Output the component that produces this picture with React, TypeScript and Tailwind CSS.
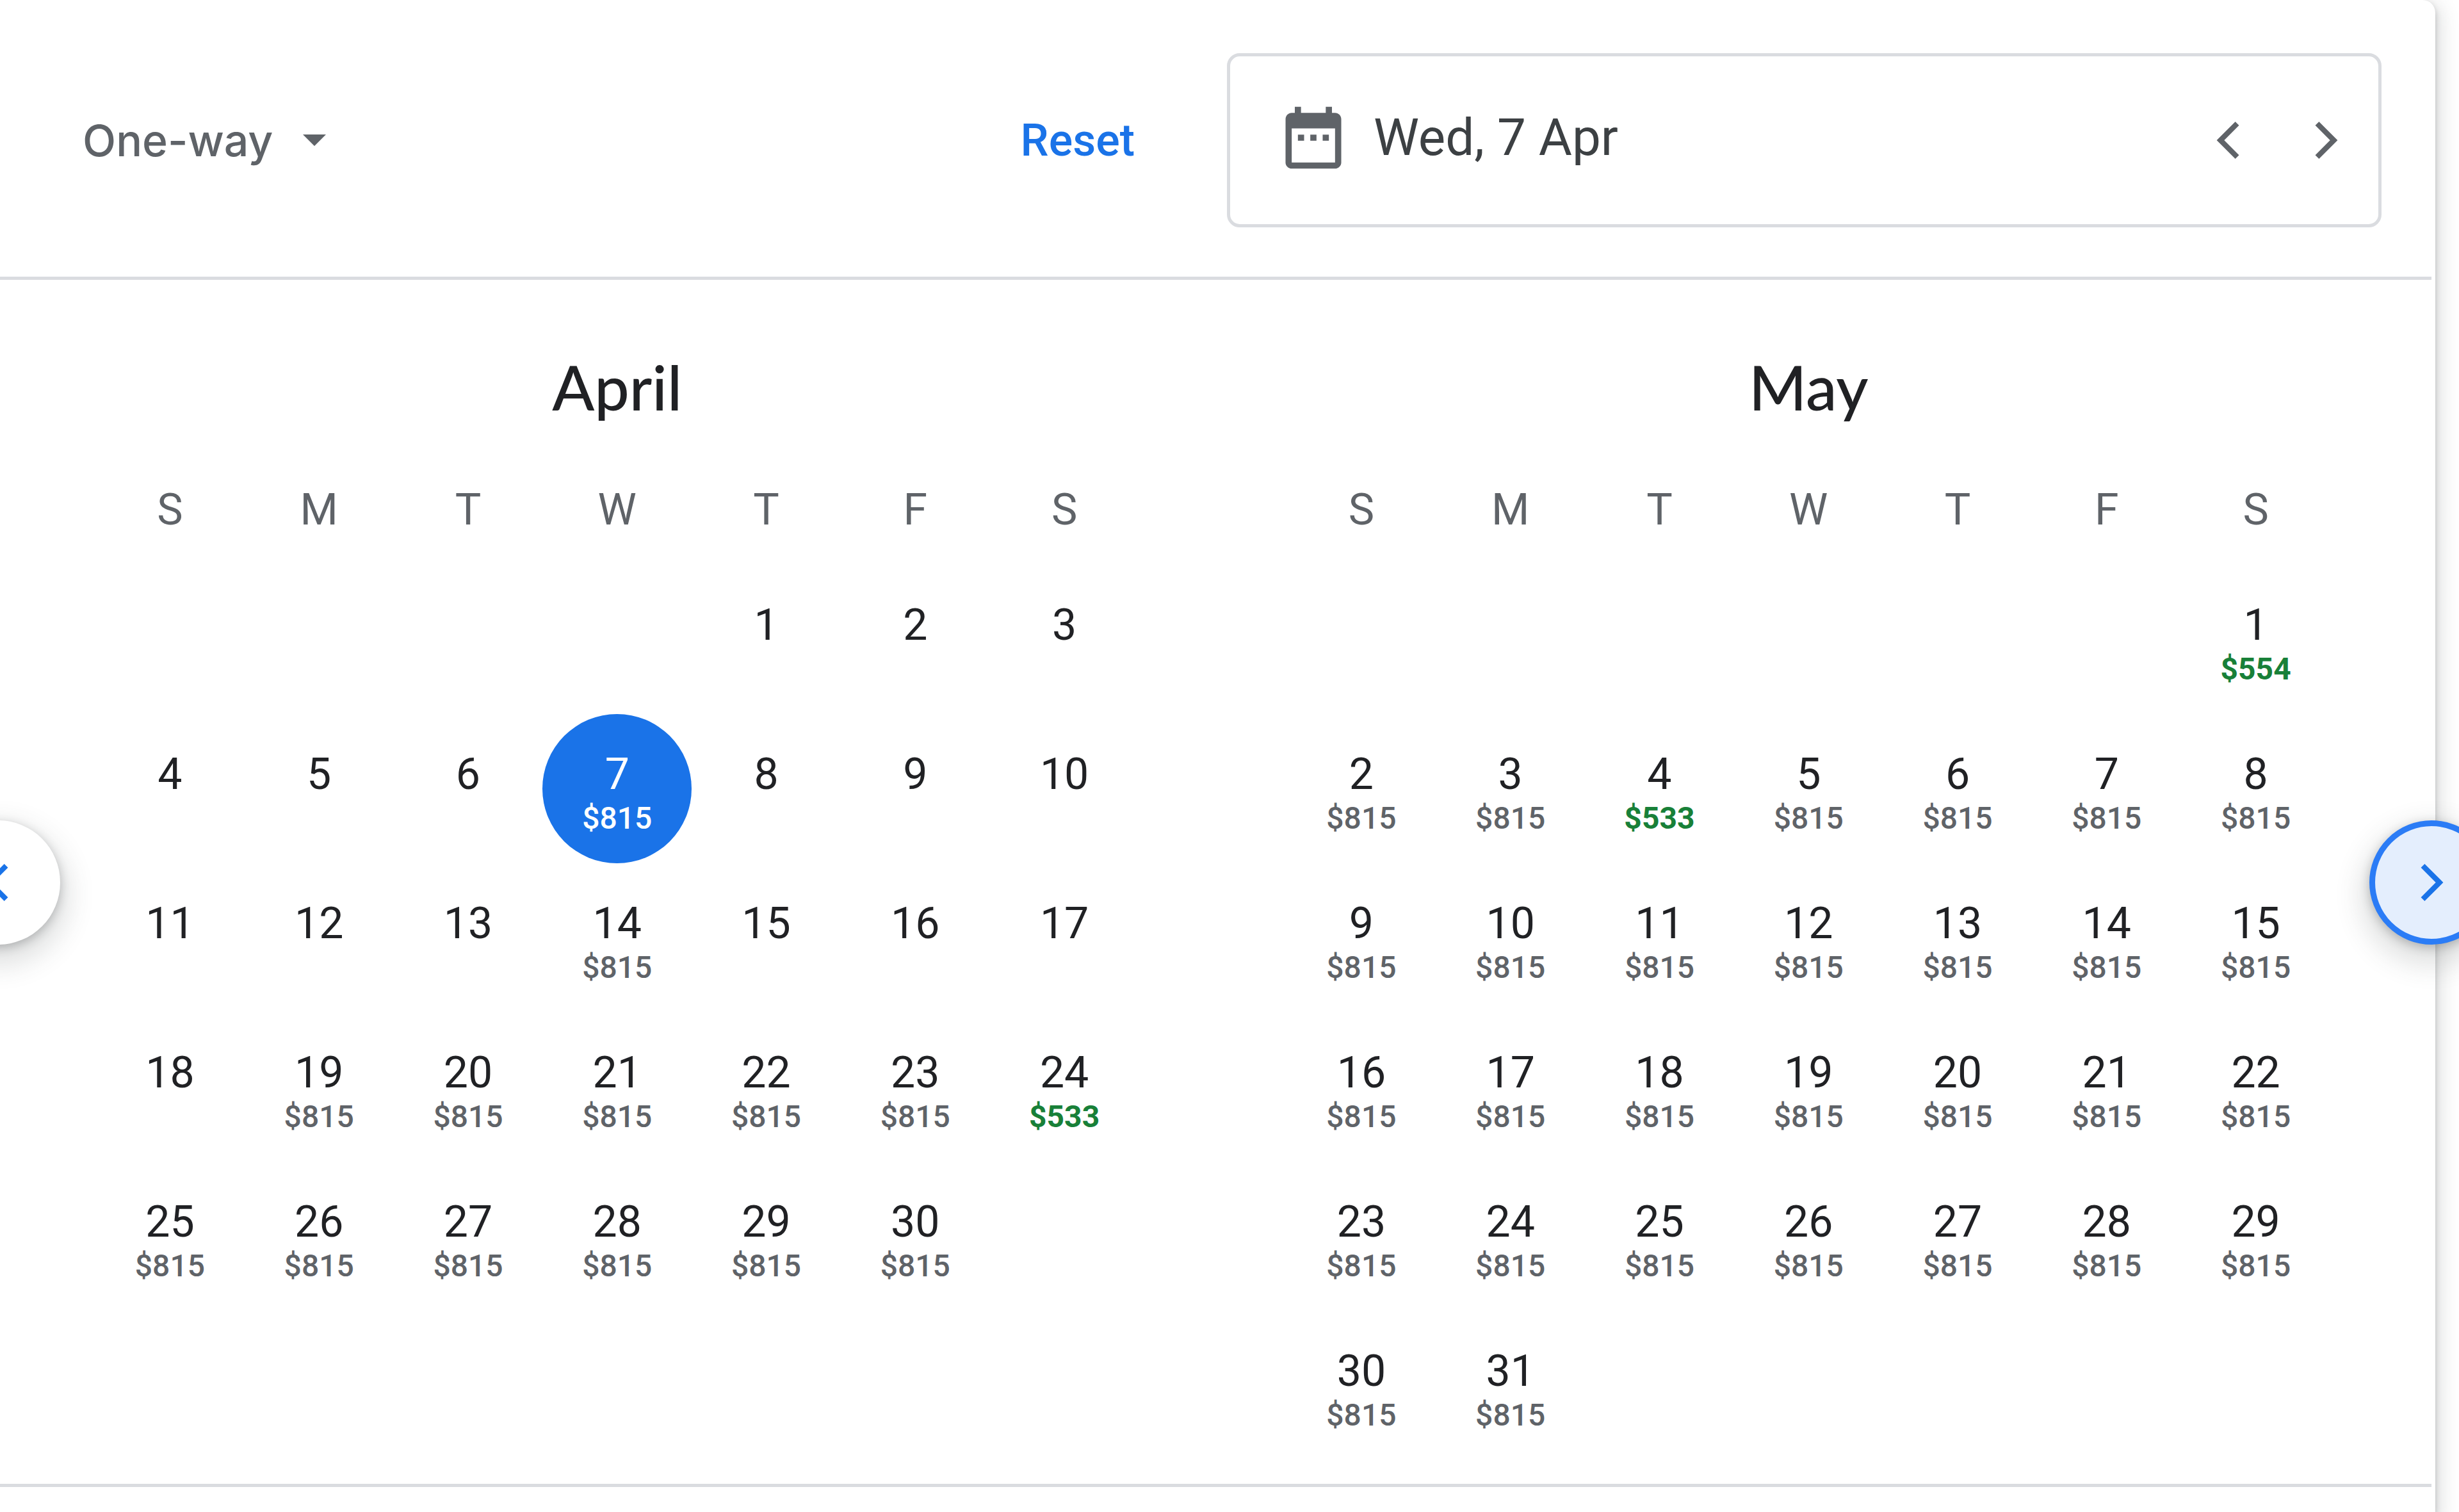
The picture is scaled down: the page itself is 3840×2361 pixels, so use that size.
import { useState } from 'react';

type Fares = Record<number, number>;

interface Month {
  name: string;
  offset: number; // weekday index of the 1st, Sunday = 0
  days: number;
  fares: Fares;
}

const WEEKDAYS = ['S', 'M', 'T', 'W', 'T', 'F', 'S'];
const CHEAP = 600;

// Same fare for a whole span of days
const span = (from: number, to: number, fare: number): Fares =>
  Object.fromEntries(Array.from({ length: to - from + 1 }, (_, i) => [from + i, fare]));

const MONTHS: Month[] = [
  {
    name: 'April',
    offset: 4,
    days: 30,
    fares: { 7: 815, 14: 815, ...span(19, 30, 815), 24: 533 },
  },
  {
    name: 'May',
    offset: 6,
    days: 31,
    fares: { ...span(2, 31, 815), 1: 554, 4: 533 },
  },
];

function toWeeks({ offset, days }: Month): (number | null)[][] {
  const rows = Math.ceil((offset + days) / 7);
  return Array.from({ length: rows }, (_, r) =>
    Array.from({ length: 7 }, (_, c) => {
      const day = r * 7 + c - offset + 1;
      return day >= 1 && day <= days ? day : null;
    }),
  );
}

function ChevronLeft() {
  return (
    <svg viewBox="0 0 24 24" className="size-[116px] shrink-0" fill="none" stroke="currentColor" strokeWidth="1.7" aria-hidden="true">
      <path d="M14.6 6.6L9.2 12l5.4 5.4" />
    </svg>
  );
}

function ChevronRight() {
  return (
    <svg viewBox="0 0 24 24" className="size-[116px] shrink-0" fill="none" stroke="currentColor" strokeWidth="1.7" aria-hidden="true">
      <path d="M9.2 6.6l5.4 5.4-5.4 5.4" />
    </svg>
  );
}

function CalendarIcon() {
  return (
    <svg viewBox="0 0 24 24" className="size-[116px] shrink-0 text-[#5f6368]" fill="currentColor" aria-hidden="true">
      <path d="M9 11H7v2h2v-2zm4 0h-2v2h2v-2zm4 0h-2v2h2v-2zm2-7h-1V2h-2v2H8V2H6v2H5c-1.11 0-1.99.9-1.99 2L3 20c0 1.1.89 2 2 2h14c1.1 0 2-.9 2-2V6c0-1.1-.9-2-2-2zm0 16H5V9h14v11z" />
    </svg>
  );
}

interface MonthProps {
  month: Month;
  selected: string;
  onSelect: (key: string) => void;
}

function MonthTable({ month, selected, onSelect }: MonthProps) {
  return (
    <section>
      <h2 className="mb-[92px] text-center font-['Lato',sans-serif] text-[97px] leading-[120px] font-medium text-[#202124]">
        {month.name}
      </h2>
      <table className="w-full table-fixed border-collapse text-center" aria-label={month.name}>
        <thead>
          <tr className="h-[126px] align-top">
            {WEEKDAYS.map((d, i) => (
              <th key={i} className="p-0 text-[68px] leading-[80px] font-normal text-[#5f6368]">{d}</th>
            ))}
          </tr>
        </thead>
        <tbody>
          {toWeeks(month).map((week, r) => (
            <tr key={r} className="h-[233px] align-top">
              {week.map((day, c) => {
                if (day === null) return <td key={c} className="p-0" />;
                const key = `${month.name}-${day}`;
                const active = key === selected;
                const fare = month.fares[day];
                const fareColor = active
                  ? 'text-white'
                  : fare < CHEAP ? 'text-[#188038]' : 'text-[#5f6368]';
                return (
                  <td key={c} className="p-0">
                    <button
                      type="button"
                      onClick={() => onSelect(key)}
                      className={`flex h-[233px] w-full flex-col items-center rounded-full pt-[54px] ${active ? 'bg-[#1a73e8] text-white' : 'text-[#202124]'}`}
                    >
                      <span className="text-[68px] leading-[80px]">{day}</span>
                      {fare && (
                        <span className={`text-[48px] leading-[58px] ${fare < CHEAP ? 'font-bold' : 'font-medium'} ${fareColor}`}>
                          ${fare}
                        </span>
                      )}
                    </button>
                  </td>
                );
              })}
            </tr>
          ))}
        </tbody>
      </table>
    </section>
  );
}

export default function App() {
  const [trip, setTrip] = useState('One-way');
  const [date, setDate] = useState('Wed, 7 Apr');
  const [selected, setSelected] = useState('April-7');

  return (
    <div className="overflow-hidden bg-white font-['Roboto',sans-serif]">
      <main className="relative mr-[37px] min-h-screen rounded-tr-[20px] bg-white pr-[6px] shadow-[0_5px_10px_rgba(60,64,67,0.3),0_10px_29px_10px_rgba(60,64,67,0.15)]">
        {/* Trip type, reset and date field */}
        <header className="flex items-center border-b-[5px] border-[#dadce0] pt-[83px] pr-[78px] pb-[77px] pl-[129px]">
          <div className="flex flex-1 items-center justify-between pr-[144px]">
            <div className="relative">
              <select
                aria-label="Trip type"
                value={trip}
                onChange={e => setTrip(e.target.value)}
                className="appearance-none bg-transparent pr-[44px] font-['Inter',sans-serif] text-[68px] leading-[88px] font-medium text-[#5f6368]"
              >
                <option>One-way</option>
                <option>Round trip</option>
              </select>
              <svg viewBox="0 0 10 5" className="pointer-events-none absolute top-1/2 right-0 h-[18px] w-[36px] -translate-y-1/2" aria-hidden="true">
                <path d="M0 0l5 5 5-5z" fill="#5f6368" />
              </svg>
            </div>
            <button
              type="button"
              onClick={() => setSelected('')}
              className="text-[70px] leading-[80px] font-medium text-[#1a73e8]"
            >
              Reset
            </button>
          </div>

          <div className="flex h-[272px] w-[1803px] items-center rounded-[20px] border-[5px] border-[#dadce0] pr-[24px] pl-[72px]">
            <label className="flex flex-1 items-center gap-[36px] pb-[8px]">
              <CalendarIcon />
              <input
                type="text"
                aria-label="Departure date"
                value={date}
                onChange={e => setDate(e.target.value)}
                className="w-full min-w-0 bg-transparent text-[80px] leading-[96px] text-[#3c4043] outline-none"
              />
            </label>
            <div className="flex gap-[35px] text-[#5f6368]">
              <button type="button" aria-label="Previous day"><ChevronLeft /></button>
              <button type="button" aria-label="Next day"><ChevronRight /></button>
            </div>
          </div>
        </header>

        {/* Months */}
        <div className="grid grid-cols-2 gap-[231px] pt-[107px] pr-[158px] pb-[37px] pl-[149px]">
          {MONTHS.map(m => (
            <MonthTable key={m.name} month={m} selected={selected} onSelect={setSelected} />
          ))}
        </div>
        <hr className="border-t-[5px] border-[#dadce0]" />

        {/* Paging buttons, half over the panel edges */}
        <button
          type="button"
          aria-label="Previous months"
          className="absolute top-[1281px] -left-[100px] flex size-[194px] items-center justify-center rounded-full bg-white text-[#1a73e8] shadow-[0_5px_15px_rgba(60,64,67,0.3),0_19px_39px_15px_rgba(60,64,67,0.15)]"
        >
          <ChevronLeft />
        </button>
        <button
          type="button"
          aria-label="Next months"
          className="absolute top-[1281px] -right-[91px] flex size-[194px] items-center justify-center rounded-full border-[9px] border-[#2b7cf6] bg-[#e4eefd] text-[#1a73e8] shadow-[0_5px_15px_rgba(60,64,67,0.3),0_19px_39px_15px_rgba(60,64,67,0.15)]"
        >
          <ChevronRight />
        </button>
      </main>
    </div>
  );
}
